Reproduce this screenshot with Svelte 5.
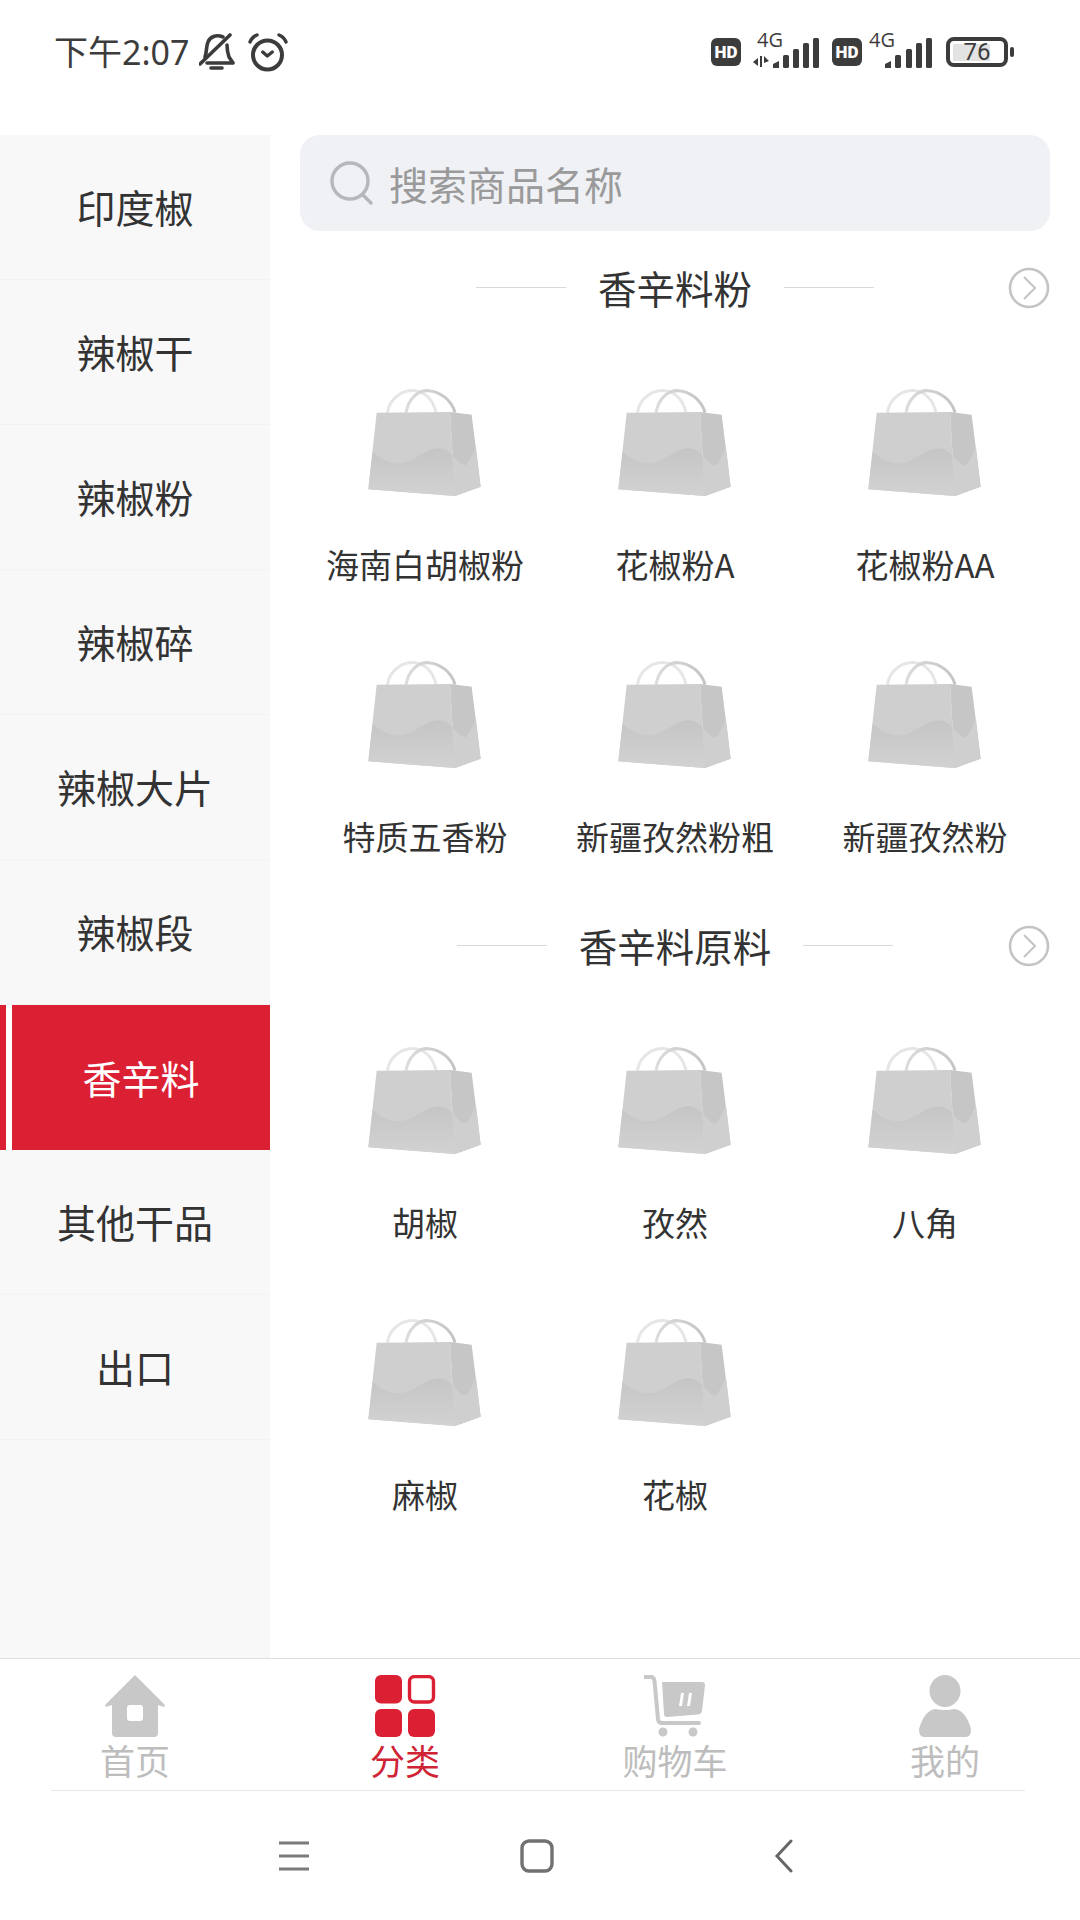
<script>
  const cats = ['印度椒', '辣椒干', '辣椒粉', '辣椒碎', '辣椒大片', '辣椒段', '香辛料', '其他干品', '出口'];
  const activeCat = '香辛料';
  const sections = [
    { title: '香辛料粉', items: ['海南白胡椒粉', '花椒粉A', '花椒粉AA', '特质五香粉', '新疆孜然粉粗', '新疆孜然粉'] },
    { title: '香辛料原料', items: ['胡椒', '孜然', '八角', '麻椒', '花椒'] },
  ];
</script>

<div class="page">
  <header class="status">
    <div class="status-left">
      <span class="time">下午2:07</span>
      <svg class="bell" viewBox="0 0 36 40" width="36" height="40" fill="none" stroke="#3c3c3c" stroke-width="3.6" stroke-linecap="round" stroke-linejoin="round">
        <path d="M6 25 C8 20 7 14 9 10 C11 5 17 2 24 5" />
        <path d="M28 13 C28 18 29 22 30 25 L34 31 H8" />
        <path d="M1 32 L31 3" />
        <path d="M12 36 H23" />
      </svg>
      <svg class="alarm" viewBox="0 0 40 40" width="40" height="40" fill="none" stroke="#3c3c3c" stroke-linecap="round" stroke-linejoin="round">
        <circle cx="19.5" cy="23" r="14.5" stroke-width="4" />
        <path d="M14.7 20 L19.3 24 L24.3 20" stroke-width="3.4" />
        <path d="M2 10 Q4 5 9 3 M38 10 Q36 5 31 3" stroke-width="3.4" />
      </svg>
    </div>
    <div class="status-right">
      <span class="hd">HD</span>
      <div class="net first">
        <span class="net-label">4G</span>
        <svg viewBox="0 0 66 31" width="66" height="31" fill="#3c3c3c">
          <path d="M5 21 V29 L0 25 Z M7 19 H9 V30 H7 Z M11 19 L16 24 L11 26 Z" />
          <path d="M20 27 L26 24 V31 H20 Z" />
          <rect x="30" y="18" width="6" height="13" rx="1.5" />
          <rect x="40" y="12" width="6" height="19" rx="1.5" />
          <rect x="50" y="6" width="6" height="25" rx="1.5" />
          <rect x="60" y="1" width="6" height="30" rx="1.5" />
        </svg>
      </div>
      <span class="hd">HD</span>
      <div class="net second">
        <span class="net-label">4G</span>
        <svg viewBox="0 0 47 31" width="47" height="31" fill="#3c3c3c">
          <path d="M0 27 L6 24 V31 H0 Z" />
          <rect x="10" y="18" width="6" height="13" rx="1.5" />
          <rect x="21" y="12" width="6" height="19" rx="1.5" />
          <rect x="31" y="6" width="6" height="25" rx="1.5" />
          <rect x="41" y="1" width="6" height="30" rx="1.5" />
        </svg>
      </div>
      <div class="battery">
        <div class="battery-body">
          <div class="battery-fill"></div>
          <span class="battery-num">76</span>
        </div>
        <div class="battery-nub"></div>
      </div>
    </div>
  </header>

  <main class="main">
    <aside class="side">
      {#each cats as cat}
        <div class="side-item" class:active={cat === activeCat}>{cat}</div>
      {/each}
    </aside>

    <section class="content">
      <div class="search">
        <svg viewBox="0 0 44 44" width="44" height="44" fill="none" stroke="#b4b8bc" stroke-width="3.4" stroke-linecap="round">
          <circle cx="20" cy="20" r="18" />
          <path d="M33 34 L41 42" />
        </svg>
        <span>搜索商品名称</span>
      </div>

      {#each sections as sec}
        <div class="title">
          <i class="rule"></i>
          <h2>{sec.title}</h2>
          <i class="rule"></i>
          <svg class="more" viewBox="0 0 42 42" width="42" height="42" fill="none" stroke="#c4c4c4">
            <circle cx="21" cy="21" r="19" stroke-width="2.6" />
            <path d="M16 10 L27 21 L16 32" stroke-width="2" />
          </svg>
        </div>
        <div class="grid">
          {#each sec.items as item}
            <div class="cell">
              <svg class="bag" viewBox="0 0 510 420" width="170" height="140">
                <defs>
                  <linearGradient id="bag-low" x1="0" y1="0" x2="0" y2="1">
                    <stop offset="0" stop-color="#c5c5c5" />
                    <stop offset="1" stop-color="#d2d2d2" />
                  </linearGradient>
                  <linearGradient id="bag-handle" x1="0" y1="0" x2="1" y2="0">
                    <stop offset="0" stop-color="#dcdcdc" />
                    <stop offset="1" stop-color="#c4c4c4" />
                  </linearGradient>
                </defs>
                <path d="M142 128 C150 80 190 60 225 62 C255 64 280 90 288 128" fill="none" stroke="#e6e6e6" stroke-width="9" />
                <path d="M198 128 C205 85 235 60 265 62 C300 64 335 90 345 128" fill="none" stroke="url(#bag-handle)" stroke-width="9" />
                <path d="M110 128 L330 126 L345 378 L85 358 Z" fill="#cfcfcf" />
                <path d="M330 126 L395 134 L422 350 L345 378 Z" fill="#c6c6c6" />
                <path d="M98 245 C130 275 170 290 210 272 C245 255 270 232 300 235 C315 237 328 245 337 256 L345 378 L85 358 Z" fill="url(#bag-low)" />
                <path d="M337 256 C348 268 358 280 370 285 C385 292 395 255 408 232 L422 350 L345 378 Z" fill="#cfcfcf" />
              </svg>
              <p>{item}</p>
            </div>
          {/each}
        </div>
      {/each}
    </section>
  </main>

  <nav class="tabs">
    <div class="tab">
      <svg viewBox="0 0 62 62" width="62" height="62">
        <path fill="#c8c8c8" fill-rule="evenodd" d="M31 0 L61 30 L60 32 L54 30 V58 Q54 62 50 62 H12 Q8 62 8 58 V30 L2 32 L1 30 Z M26 30 Q23 30 23 33 V43 Q23 46 26 46 H36 Q39 46 39 43 V33 Q39 30 36 30 Z" />
      </svg>
      <span>首页</span>
    </div>
    <div class="tab on">
      <svg viewBox="0 0 62 62" width="62" height="62" fill="#dc2033">
        <rect x="1" y="0" width="27" height="28.5" rx="6" />
        <rect x="35.5" y="1.5" width="24" height="25.5" rx="5" fill="none" stroke="#dc2033" stroke-width="3.4" />
        <rect x="1" y="34" width="27" height="28" rx="6" />
        <rect x="34" y="34" width="27" height="28" rx="6" />
      </svg>
      <span>分类</span>
    </div>
    <div class="tab">
      <svg viewBox="0 0 62 62" width="62" height="62">
        <path d="M1 2 H7 Q10 2 10.5 6 L14 44 Q14.5 48 18 48 H55" fill="none" stroke="#c8c8c8" stroke-width="4" stroke-linecap="round" />
        <path fill="#c8c8c8" fill-rule="evenodd" d="M18 7 H58 Q61 7 61 10 L58 36 Q57.5 39 54 39.5 L23 42 Q20 42 20 39 Z M37 18 L35 31 H38 L40 18 Z M45 18 L43 31 H46 L48 18 Z" />
        <circle cx="19" cy="57" r="4.5" fill="#c8c8c8" />
        <circle cx="49" cy="57" r="4.5" fill="#c8c8c8" />
      </svg>
      <span>购物车</span>
    </div>
    <div class="tab">
      <svg viewBox="0 0 62 62" width="62" height="62" fill="#c8c8c8">
        <ellipse cx="31" cy="16" rx="15.5" ry="16" />
        <path d="M21 34 Q31 36 41 34 Q52 36 57 54 Q57 62 52 62 H10 Q5 62 5 54 Q10 36 21 34 Z" />
      </svg>
      <span>我的</span>
    </div>
  </nav>

  <footer class="sysnav">
    <svg viewBox="0 0 32 30" width="32" height="30" fill="none" stroke="#7b7b7b" stroke-width="3">
      <path d="M1 2 H31 M1 15 H31 M1 28 H31" />
    </svg>
    <svg viewBox="0 0 34 34" width="34" height="34" fill="none" stroke="#717171" stroke-width="3.4">
      <rect x="2" y="2" width="30" height="30" rx="7" />
    </svg>
    <svg class="back" viewBox="0 0 20 34" width="20" height="34" fill="none" stroke="#666" stroke-width="3" stroke-linecap="round">
      <path d="M17 2 L3 17 L17 32" />
    </svg>
  </footer>
</div>

<style>
  :global(body) {
    background: #fff;
  }

  .page {
    width: 1080px;
    height: 1920px;
    display: flex;
    flex-direction: column;
    overflow: hidden;
    background: #fff;
    color: #333;
    font-family: "Noto Sans CJK SC", "Noto Sans", sans-serif;
  }

  /* status bar */
  .status {
    height: 135px;
    flex: none;
    display: flex;
    justify-content: space-between;
    align-items: flex-start;
    padding: 32px 66px 0 54px;
    box-sizing: border-box;
  }

  .status-left {
    display: flex;
    align-items: center;
    height: 40px;
  }

  .time {
    font-family: "Noto Sans", "Noto Sans CJK SC", sans-serif;
    font-size: 34px;
    color: #3c3c3c;
    line-height: 40px;
  }

  .bell {
    margin-left: 10px;
  }

  .alarm {
    margin-left: 13px;
  }

  .status-right {
    display: flex;
    align-items: flex-start;
  }

  .hd {
    width: 30px;
    height: 28px;
    margin-top: 6px;
    border-radius: 6px;
    background: #3c3c3c;
    color: #fff;
    font-family: "Roboto", sans-serif;
    font-weight: 900;
    font-size: 17px;
    line-height: 28px;
    text-align: center;
  }

  .net {
    position: relative;
    height: 36px;
    display: flex;
    align-items: flex-end;
    justify-content: flex-end;
  }

  .net.first {
    width: 66px;
    margin: 0 13px 0 12px;
  }

  .net.second {
    width: 63px;
    margin: 0 14px 0 7px;
  }

  .net-label {
    position: absolute;
    top: -4px;
    left: 0;
    font-family: "Open Sans", sans-serif;
    font-size: 20px;
    line-height: 24px;
    color: #3c3c3c;
  }

  .net.first .net-label {
    left: 4px;
  }

  .battery {
    display: flex;
    align-items: center;
    height: 30px;
    margin-top: 5px;
  }

  .battery-body {
    position: relative;
    width: 62px;
    height: 30px;
    box-sizing: border-box;
    border: 4px solid #3c3c3c;
    border-radius: 8px;
    text-align: center;
  }

  .battery-fill {
    position: absolute;
    left: 3px;
    top: 3px;
    bottom: 2px;
    width: 37px;
    background: #e3e3e3;
  }

  .battery-num {
    position: relative;
    display: block;
    font-family: "Roboto", sans-serif;
    font-size: 24px;
    line-height: 23px;
    color: #3c3c3c;
  }

  .battery-nub {
    width: 4px;
    height: 10px;
    margin-left: 2px;
    border-radius: 2px;
    background: #3c3c3c;
  }

  /* body */
  .main {
    height: 1523px;
    flex: none;
    display: flex;
  }

  .side {
    width: 270px;
    flex: none;
    background: #f8f8f9;
  }

  .side-item {
    height: 145px;
    box-sizing: border-box;
    display: flex;
    align-items: center;
    justify-content: center;
    padding-bottom: 2px;
    border-bottom: 1px solid #f3f3f4;
    font-size: 39px;
    color: #333;
  }

  .side-item.active {
    padding-left: 12px;
    border-bottom: 0;
    color: #fff;
    background: linear-gradient(to right, #dc2033 6px, #fff 6px, #fff 12px, #dc2033 12px);
  }

  .content {
    flex: 1;
    min-width: 0;
    padding: 0 30px;
  }

  .search {
    height: 96px;
    display: flex;
    align-items: center;
    gap: 15px;
    padding-left: 30px;
    border-radius: 20px;
    background: #f0f1f5;
    font-size: 39px;
    color: #9a9a9a;
  }

  .title {
    position: relative;
    height: 114px;
    display: flex;
    align-items: center;
    justify-content: center;
    padding-bottom: 2px;
    box-sizing: border-box;
  }

  .title h2 {
    margin: 0 32px;
    font-size: 38.5px;
    font-weight: 400;
    color: #333;
    line-height: 54px;
  }

  .rule {
    width: 90px;
    height: 1px;
    background: #d9d9d9;
  }

  .more {
    position: absolute;
    right: 0;
    top: 36px;
  }

  .grid {
    display: grid;
    grid-template-columns: repeat(3, 250px);
    grid-auto-rows: 272px;
  }

  .cell {
    display: flex;
    flex-direction: column;
    align-items: center;
    padding-top: 25px;
    box-sizing: border-box;
  }

  .cell p {
    margin: 28px 0 0;
    font-size: 33px;
    line-height: 52px;
    color: #333;
    white-space: nowrap;
  }

  /* bottom */
  .tabs {
    height: 132px;
    flex: none;
    box-sizing: border-box;
    display: grid;
    grid-template-columns: repeat(4, 270px);
    border-top: 1px solid #dedede;
    padding-top: 16px;
  }

  .tab {
    display: flex;
    flex-direction: column;
    align-items: center;
    font-size: 35px;
    line-height: 46px;
    color: #bdbdbd;
  }

  .tab.on {
    color: #cf2436;
  }

  .sysnav {
    flex: 1;
    width: 974px;
    margin-left: 51px;
    padding-left: 227px;
    box-sizing: border-box;
    border-top: 1px solid #e8e8e8;
    display: flex;
    align-items: center;
    gap: 210px;
  }

  .back {
    margin-left: 10px;
  }
</style>
